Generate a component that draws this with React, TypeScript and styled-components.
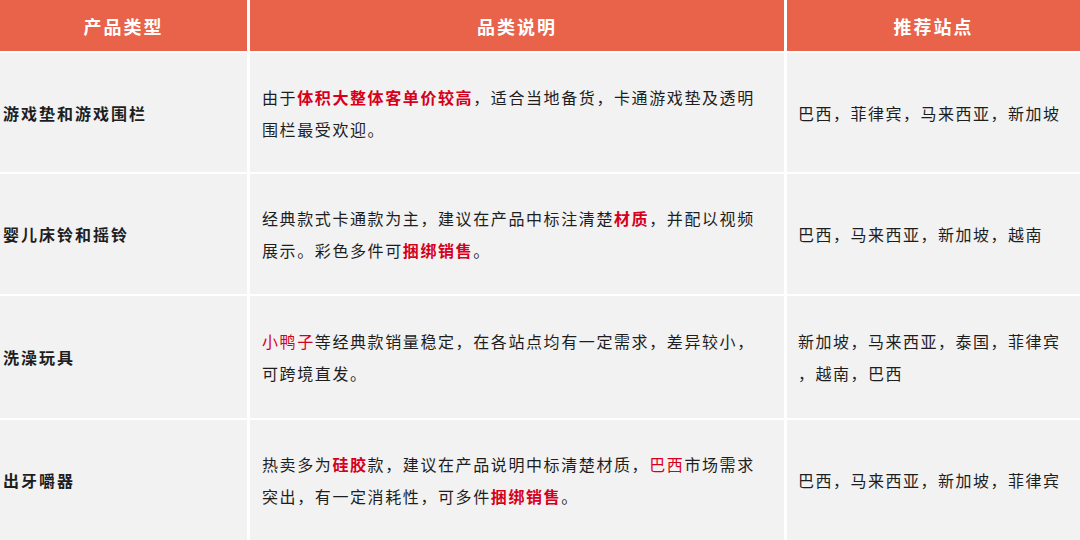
import React from "react";
import styled, { createGlobalStyle } from "styled-components";

const Global = createGlobalStyle`
  html, body { margin: 0; padding: 0; background: #ffffff; }
  body { font-family: "Noto Sans CJK SC", "Noto Sans", sans-serif; }
`;

const Table = styled.div`
  width: 1080px;
  height: 540px;
  display: grid;
  grid-template-columns: 247px 534px 1fr;
  grid-template-rows: 51px 119px 120px 122px 120px;
  column-gap: 3px;
  row-gap: 2px;
  background: #ffffff;
  overflow: hidden;
`;

const HeadCell = styled.div`
  background: #e9624a;
  color: #ffffff;
  font-size: 18px;
  font-weight: 700;
  letter-spacing: 2px;
  display: flex;
  align-items: center;
  justify-content: center;
`;

const Cell = styled.div<{ $pad: number; $bold?: boolean; $spacing: number; $loose?: boolean }>`
  background: #f2f2f2;
  color: #1e1e1e;
  font-size: 16px;
  line-height: 32px;
  letter-spacing: ${(p) => p.$spacing}px;
  font-weight: ${(p) => (p.$bold ? 700 : 400)};
  line-break: ${(p) => (p.$loose ? "anywhere" : "auto")};
  display: flex;
  align-items: center;
  padding: 0 ${(p) => p.$pad}px;
`;

const Text = styled.p`
  margin: 0;
`;

const Red = styled.span<{ $bold?: boolean }>`
  color: #d6001c;
  font-weight: ${(p) => (p.$bold ? 700 : 400)};
`;

type Row = { type: string; desc: React.ReactNode; sites: string };

const rows: Row[] = [
  {
    type: "游戏垫和游戏围栏",
    desc: (
      <>
        由于<Red $bold>体积大整体客单价较高</Red>，适合当地备货，卡通游戏垫及透明围栏最受欢迎。
      </>
    ),
    sites: "巴西，菲律宾，马来西亚，新加坡",
  },
  {
    type: "婴儿床铃和摇铃",
    desc: (
      <>
        经典款式卡通款为主，建议在产品中标注清楚<Red $bold>材质</Red>，并配以视频展示。彩色多件可<Red $bold>捆绑销售</Red>。
      </>
    ),
    sites: "巴西，马来西亚，新加坡，越南",
  },
  {
    type: "洗澡玩具",
    desc: (
      <>
        <Red>小鸭子</Red>等经典款销量稳定，在各站点均有一定需求，差异较小，可跨境直发。
      </>
    ),
    sites: "新加坡，马来西亚，泰国，菲律宾，越南，巴西",
  },
  {
    type: "出牙嚼器",
    desc: (
      <>
        热卖多为<Red $bold>硅胶</Red>款，建议在产品说明中标清楚材质，<Red>巴西</Red>市场需求突出，有一定消耗性，可多件<Red $bold>捆绑销售</Red>。
      </>
    ),
    sites: "巴西，马来西亚，新加坡，菲律宾",
  },
];

export default function App() {
  return (
    <>
      <Global />
      <Table>
        <HeadCell>产品类型</HeadCell>
        <HeadCell>品类说明</HeadCell>
        <HeadCell>推荐站点</HeadCell>
        {rows.map((r) => (
          <React.Fragment key={r.type}>
            <Cell $pad={3} $bold $spacing={2}>
              <Text>{r.type}</Text>
            </Cell>
            <Cell $pad={12} $spacing={1.6}>
              <Text>{r.desc}</Text>
            </Cell>
            <Cell $pad={11} $spacing={1.5} $loose>
              <Text>{r.sites}</Text>
            </Cell>
          </React.Fragment>
        ))}
      </Table>
    </>
  );
}
